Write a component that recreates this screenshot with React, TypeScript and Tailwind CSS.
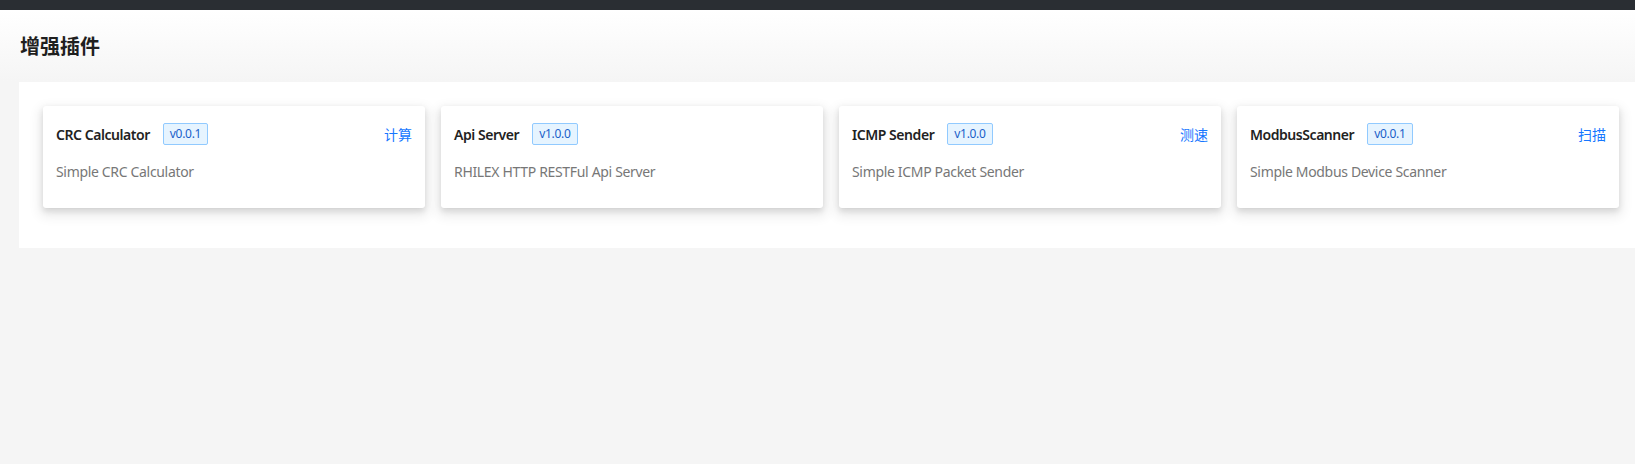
import React from "react";

type Plugin = {
  name: string;
  version: string;
  description: string;
  action?: string;
};

const plugins: Plugin[] = [
  { name: "CRC Calculator", version: "v0.0.1", description: "Simple CRC Calculator", action: "计算" },
  { name: "Api Server", version: "v1.0.0", description: "RHILEX HTTP RESTFul Api Server" },
  { name: "ICMP Sender", version: "v1.0.0", description: "Simple ICMP Packet Sender", action: "测速" },
  { name: "ModbusScanner", version: "v0.0.1", description: "Simple Modbus Device Scanner", action: "扫描" },
];

const font = "font-['Noto_Sans','Noto_Sans_CJK_SC',sans-serif]";

function PluginCard({ name, version, description, action }: Plugin) {
  return (
    <div className="w-[382px] shrink-0 bg-white rounded-[3px] shadow-[0_1px_2px_-2px_rgba(0,0,0,0.16),0_3px_6px_0_rgba(0,0,0,0.12),0_5px_12px_4px_rgba(0,0,0,0.07)] px-[13px] pt-[17px] pb-[25px]">
      <div className="flex items-center h-[22px]">
        <span className="text-[14px] font-semibold text-[#222] tracking-[-0.45px]">{name}</span>
        <span className="ml-[13px] h-[22px] px-[6px] flex items-center text-[12px] tracking-[-0.3px] text-[#1a5fc9] bg-[#e6f4ff] border border-[#91caff] rounded-[2px]">
          {version}
        </span>
        <div className="flex-1" />
        {action && <a className="text-[14px] text-[#1677ff] cursor-pointer">{action}</a>}
      </div>
      <p className="mt-[16px] text-[14px] leading-[22px] text-[#777] tracking-[-0.33px]">{description}</p>
    </div>
  );
}

export default function App() {
  return (
    <div className={`${font} w-full min-h-[464px] bg-[#f5f5f5] overflow-hidden`}>
      {/* top nav strip */}
      <div className="h-[10px] bg-[#2a2e33]" />

      {/* page header */}
      <div className="bg-gradient-to-b from-[#ffffff] to-[#f5f5f5] pl-[20px] pt-[23px] pb-[21px]">
        <h1 className="text-[20px] leading-[28px] font-bold text-[#1f1f1f]">增强插件</h1>
      </div>

      {/* plugin list */}
      <div className="pl-[19px]">
        <div className="w-[1624px] bg-white pt-[24px] px-[24px] pb-[40px]">
          <div className="flex gap-[16px]">
            {plugins.map((p) => (
              <PluginCard key={p.name} {...p} />
            ))}
          </div>
        </div>
      </div>
    </div>
  );
}
